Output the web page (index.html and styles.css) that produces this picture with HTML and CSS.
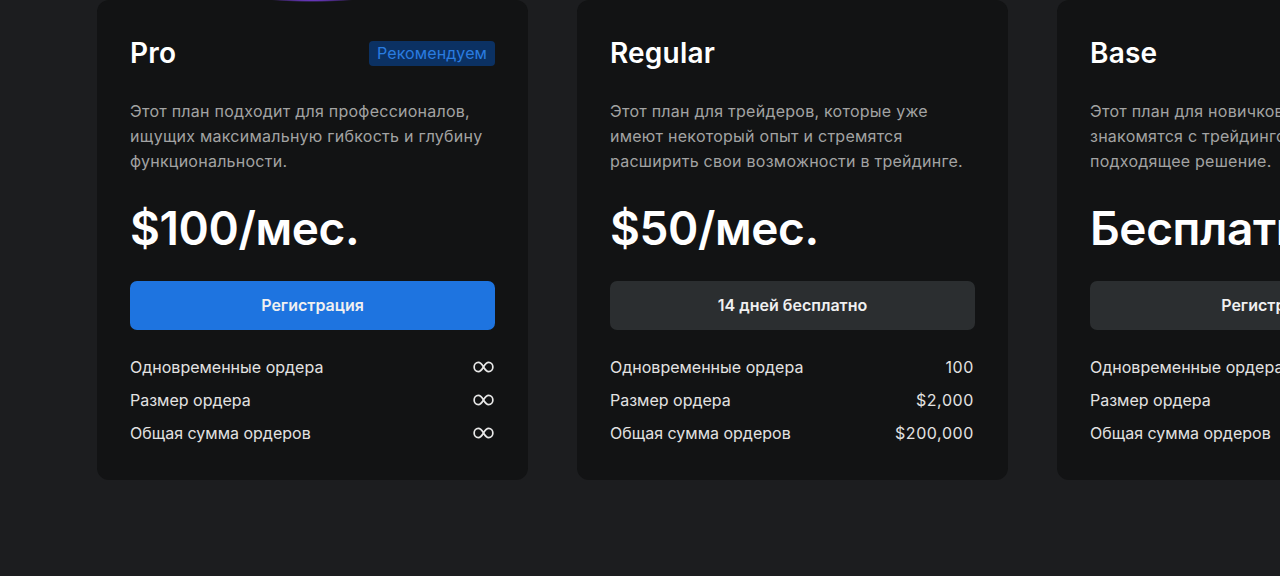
FILE: index.html
```html
<!DOCTYPE html>
<html lang="ru">
<head>
	<meta charset="UTF-8">
	<title>Тарифы</title>
	<link rel="stylesheet" href="styles.css">
</head>
<body>
	<div class="plans">
		<div class="plan plan-pro">
			<div class="plan-head">
				<h2>Pro</h2>
				<span class="badge">Рекомендуем</span>
			</div>
			<p class="desc">Этот план подходит для профессионалов, ищущих максимальную гибкость и глубину функциональности.</p>
			<div class="price">$100/мес.</div>
			<a href="javascript:;" class="btn btn-blue">Регистрация</a>
			<ul class="features">
				<li><span>Одновременные ордера</span><svg class="inf" viewBox="0 0 22 12"><path d="M11 6C9 2.5 7.5 1.2 5.6 1.2 3 1.2 1.2 3.3 1.2 6s1.8 4.8 4.4 4.8C7.5 10.8 9 9.5 11 6s3.5-4.8 5.4-4.8c2.6 0 4.4 2.1 4.4 4.8s-1.8 4.8-4.4 4.8C14.5 10.8 13 9.5 11 6z"/></svg></li>
				<li><span>Размер ордера</span><svg class="inf" viewBox="0 0 22 12"><path d="M11 6C9 2.5 7.5 1.2 5.6 1.2 3 1.2 1.2 3.3 1.2 6s1.8 4.8 4.4 4.8C7.5 10.8 9 9.5 11 6s3.5-4.8 5.4-4.8c2.6 0 4.4 2.1 4.4 4.8s-1.8 4.8-4.4 4.8C14.5 10.8 13 9.5 11 6z"/></svg></li>
				<li><span>Общая сумма ордеров</span><svg class="inf" viewBox="0 0 22 12"><path d="M11 6C9 2.5 7.5 1.2 5.6 1.2 3 1.2 1.2 3.3 1.2 6s1.8 4.8 4.4 4.8C7.5 10.8 9 9.5 11 6s3.5-4.8 5.4-4.8c2.6 0 4.4 2.1 4.4 4.8s-1.8 4.8-4.4 4.8C14.5 10.8 13 9.5 11 6z"/></svg></li>
			</ul>
		</div>
		<div class="plan">
			<div class="plan-head">
				<h2>Regular</h2>
			</div>
			<p class="desc">Этот план для трейдеров, которые уже имеют некоторый опыт и стремятся расширить свои возможности в трейдинге.</p>
			<div class="price">$50/мес.</div>
			<a href="javascript:;" class="btn">14 дней бесплатно</a>
			<ul class="features">
				<li><span>Одновременные ордера</span><span class="val">100</span></li>
				<li><span>Размер ордера</span><span class="val">$2,000</span></li>
				<li><span>Общая сумма ордеров</span><span class="val">$200,000</span></li>
			</ul>
		</div>
		<div class="plan">
			<div class="plan-head">
				<h2>Base</h2>
			</div>
			<p class="desc">Этот план для новичков, которые только знакомятся с трейдингом и ищут подходящее решение.</p>
			<div class="price">Бесплатно</div>
			<a href="javascript:;" class="btn">Регистрация</a>
			<ul class="features">
				<li><span>Одновременные ордера</span><span class="val">5</span></li>
				<li><span>Размер ордера</span><span class="val">$500</span></li>
				<li><span>Общая сумма ордеров</span><span class="val">$2,500</span></li>
			</ul>
		</div>
	</div>
</body>
</html>
```

FILE: styles.css
```css
*{padding: 0;margin: 0;list-style: none;box-sizing: border-box;}
body{background: #1c1d1f;font-family: Inter, "Noto Sans", sans-serif;color: #fff;overflow: hidden;}
.plans{display: flex;gap: 49px;padding-left: 97px;width: 1280px;overflow: hidden;}
.plan{position: relative;flex: 0 0 431px;height: 480px;background: #121314;border-radius: 12px;padding: 33px 33px 30px;}
.plan-pro::before{content: "";position: absolute;left: 165px;top: -6px;width: 100px;height: 8px;border-radius: 50%;background: radial-gradient(ellipse at center, #8a45ff 0%, rgba(138,69,255,0.8) 40%, rgba(138,69,255,0) 72%);}
.plan-head{display: flex;justify-content: space-between;align-items: center;height: 40px;}
.plan-head h2{font-size: 28px;font-weight: 600;letter-spacing: 0.2px;}
.badge{background: #0b3163;color: #2a7ce0;font-size: 16px;line-height: 25px;padding: 0 8px;border-radius: 4px;letter-spacing: 0.1px;}
.desc{margin-top: 26px;font-size: 16px;line-height: 25px;color: #a3a3a3;letter-spacing: 0.25px;}
.price{margin-top: 25px;font-size: 46px;line-height: 58px;font-weight: 600;letter-spacing: -0.4px;white-space: nowrap;}
.btn{display: block;margin-top: 24px;height: 49px;line-height: 49px;text-align: center;border-radius: 7px;background: #2b2e30;color: #f0f0f0;font-size: 16px;font-weight: 600;text-decoration: none;}
.btn-blue{background: #1e74e0;}
.features{margin-top: 20px;}
.features li{display: flex;justify-content: space-between;align-items: center;height: 33px;font-size: 16px;color: #e2e2e2;white-space: nowrap;}
.val{letter-spacing: 0.6px;margin-right: 1px;}
.inf{width: 21px;height: 12px;margin-right: 1px;fill: none;stroke: #e8e8e8;stroke-width: 1.8;}
```
